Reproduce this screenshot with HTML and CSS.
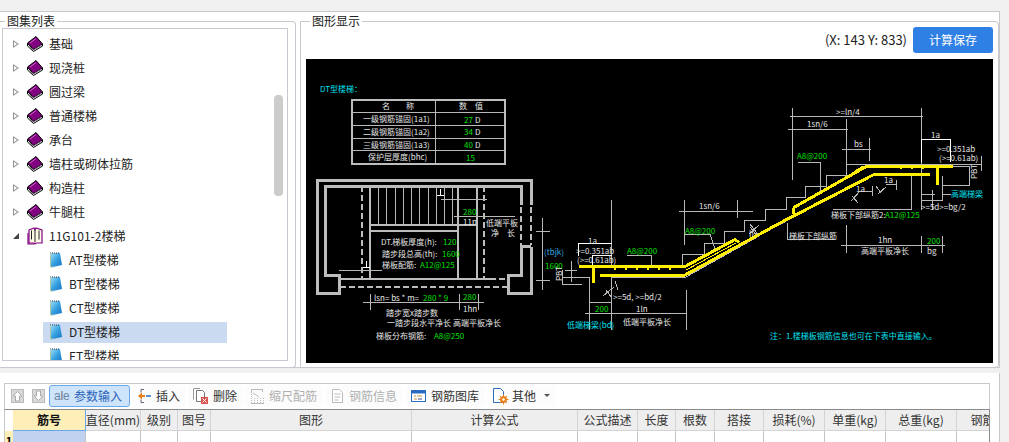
FILE: index.html
```html
<!DOCTYPE html>
<html lang="zh">
<head>
<meta charset="utf-8">
<title>图集</title>
<link rel="stylesheet" href="styles.css">
</head>
<body>
<svg class="defs" width="0" height="0">
  <defs>
    <symbol id="book" viewBox="0 0 16 16">
      <path d="M.5 7.500v2.500l6 5.500 9-5.500V8L6.500 13.500z" fill="#fff" stroke="#000"/>
      <path d="M.5 7 9 .5l6.500 7.500-9 5.500z" fill="#800080" stroke="#000"/>
      <path d="M3 7 9 2.500" stroke="#c86ac8" fill="none"/>
      <path d="M2 10.500l4.500 3.500 7.500-4.500" stroke="#888" fill="none"/>
    </symbol>
    <symbol id="openbook" viewBox="0 0 16 18">
      <path d="M2 3 7 1l1 2 1-2 6 2v13H9l-1 1-1-1H2z" fill="#fffbe6" stroke="#800080" stroke-width="1.200"/>
      <path d="M8 3v12M4.500 3.500v9M12 3.500v9" stroke="#222" fill="none"/>
      <path d="M1 6v11h6" stroke="#800080" fill="none" stroke-width="1.200"/>
    </symbol>
    <linearGradient id="noteFill" x1="0" y1="0" x2="1" y2="1">
      <stop offset="0" stop-color="#a8e2f4"/>
      <stop offset=".5" stop-color="#3aa3e2"/>
      <stop offset="1" stop-color="#1371c4"/>
    </linearGradient>
    <symbol id="note" viewBox="0 0 14 16">
      <path d="M1 1h10l2 12-9 2H1z" fill="url(#noteFill)"/>
      <path d="M1 1h10" stroke="#335" stroke-dasharray="1 1" fill="none"/>
      <path d="M1.500 1v14h3" stroke="#a8c8a8" fill="none"/>
    </symbol>
  </defs>
</svg>

<div class="topstrip"></div>

<main class="main">
  <fieldset class="group group-list">
    <legend>图集列表</legend>
    <div class="tree">
      <div class="row"><i class="tri"></i><svg class="ic-book"><use href="#book"/></svg>基础</div>
      <div class="row"><i class="tri"></i><svg class="ic-book"><use href="#book"/></svg>现浇桩</div>
      <div class="row"><i class="tri"></i><svg class="ic-book"><use href="#book"/></svg>圆过梁</div>
      <div class="row"><i class="tri"></i><svg class="ic-book"><use href="#book"/></svg>普通楼梯</div>
      <div class="row"><i class="tri"></i><svg class="ic-book"><use href="#book"/></svg>承台</div>
      <div class="row"><i class="tri"></i><svg class="ic-book"><use href="#book"/></svg>墙柱或砌体拉筋</div>
      <div class="row"><i class="tri"></i><svg class="ic-book"><use href="#book"/></svg>构造柱</div>
      <div class="row"><i class="tri"></i><svg class="ic-book"><use href="#book"/></svg>牛腿柱</div>
      <div class="row"><i class="tri-open"></i><svg class="ic-book tall"><use href="#openbook"/></svg>11G101-2楼梯</div>
      <div class="row child"><svg class="ic-note"><use href="#note"/></svg>AT型楼梯</div>
      <div class="row child"><svg class="ic-note"><use href="#note"/></svg>BT型楼梯</div>
      <div class="row child"><svg class="ic-note"><use href="#note"/></svg>CT型楼梯</div>
      <div class="row child selected"><svg class="ic-note"><use href="#note"/></svg>DT型楼梯</div>
      <div class="row child"><svg class="ic-note"><use href="#note"/></svg>ET型楼梯</div>
      <div class="thumb"></div>
    </div>
  </fieldset>

  <fieldset class="group group-view">
    <legend>图形显示</legend>
    <div class="viewbar">
      <span class="coords">(X: 143 Y: 833)</span>
      <button class="save">计算保存</button>
    </div>
    <svg class="cad" width="687" height="304" viewBox="306 59 687 304">
      <!-- table -->
      <rect class="w2" x="351.5" y="99.5" width="153" height="64"/>
      <path class="w1" d="M435.500 99v64M352 112.500h152M352 125.500h152M352 138.500h152M352 150.500h152"/>
      <text class="t cy" x="320" y="92">DT型楼梯：</text>
      <text class="t" x="382" y="109">名　　称</text>
      <text class="t" x="459" y="109">数　值</text>
      <text class="t" x="363" y="122">一级钢筋锚固(1a1)</text>
      <text class="t" x="363" y="135">二级钢筋锚固(1a2)</text>
      <text class="t" x="363" y="148">三级钢筋锚固(1a3)</text>
      <text class="t" x="368" y="160">保护层厚度(bhc)</text>
      <text class="t gr" x="464" y="123">27</text><text class="t" x="475" y="123">D</text>
      <text class="t gr" x="464" y="135">34</text><text class="t" x="475" y="135">D</text>
      <text class="t gr" x="464" y="148">40</text><text class="t" x="475" y="148">D</text>
      <text class="t gr" x="466" y="161">15</text>

      <!-- plan -->
      <path class="w3" d="M531 205V180H317v113h22v-18h-14V186h196v19M531 247v46h-23v-18h13v-29h10"/>
      <path class="w3d" d="M521 207v38M531 207v38"/>
      <path class="w2" d="M339 279h151M370 186v93M458 186v93M477 186v93M370 225h107M370 231h88"/>
      <path class="w2d" d="M490 279h18M340 287h167M362 186v92M484 186v93"/>
      <path class="w1" d="M378.500 186v39M386.500 186v39M395.500 186v39M403.500 186v39M411.500 186v39M419.500 186v39M428.500 186v39M436.500 186v39M444.500 186v39M452.500 186v39"/>
      <path class="w1w" d="M440.500 189v6M437 195.500h7M366.500 261v6M363 267.500h7"/>
      <path class="w1" d="M441 199.500h46M339 270.500h43M454 216.500h61M542.500 218v72M536 231.500h14M536 280.500h14M363 302.500h121M370.500 294v16M459.500 294v16M478.500 294v16"/>
      <text class="t gr" x="463" y="215">280</text>
      <text class="t" x="463" y="225">11n</text>
      <text class="t" x="486" y="226">低端平板</text>
      <text class="t" x="491" y="236">净　长</text>
      <text class="t" x="381" y="245">DT.梯板厚度(h):</text><text class="t gr" x="443" y="245">120</text>
      <text class="t" x="382" y="257">踏步段总高(th):</text><text class="t gr" x="442" y="257">1600</text>
      <text class="t" x="382" y="268">梯板配筋:</text><text class="t gr" x="420" y="268">A12@125</text>
      <text class="t" x="374" y="301">lsn= bs * m=</text><text class="t gr" x="423" y="301">280 * 9</text>
      <text class="t gr" x="463" y="300">280</text>
      <text class="t" x="463" y="312">1hn</text>
      <text class="t" x="386" y="316">踏步宽x踏步数</text>
      <text class="t" x="387" y="326">一踏步段水平净长</text>
      <text class="t" x="453" y="326">高端平板净长</text>
      <text class="t" x="376" y="339">梯板分布钢筋:</text>
      <text class="t gr" x="434" y="339">A8@250</text>

      <!-- section: concrete outline -->
      <path class="w1" d="M580 266.500h102v-12h22v-11h20v-12h20v-11h21v-11h21v-12h19v-11h21v-11h20v-11h135"/>
      <path class="w1" d="M562 277.500h27v25h22v-25h74l75-42M760 235l113-60M953 166.500h16v19h-27v15h-21v-25M873 174.500h57"/>
      <path class="w1" d="M562 270v14.500h20M571.500 261v21M565 270.500h12M981.500 156v15M942.500 176v24"/>
      <path class="w1" d="M611.500 200v66M684.500 200v45M737.500 200v18M679 211.500h74M585 313.500h101M589.500 290v40M611.500 290v40M686.500 290v40"/>
      <path class="w1" d="M627 255.500h24v12M685 234.500h25l5 14M798 162.500h22v28M833 209.500h78v-36M787 223v16.500h48"/>
      <path class="w1" d="M792.500 108v72M921.500 108v67M790 116.500h133M788 129.500h60M846.500 119v46M842 149.500h29M869.500 138v23M841 245.500h104M846.500 225v28M921.500 236v17M942.500 236v17"/>
      <path class="w1" d="M921 194.500h14M942 194.500h9M932.500 190v20M921 200v10"/>
      <path class="w1" d="M603 296l11-9M606 290l6 8M615 281l3 9M750 224l9 12M749 234l10-9M757 236l-7-9M851 201l9-10M852 196l6 7M860 191h12M872 186v10M878 194l8-7M876 186l5 7M886 184h10M896 180v10"/>
      <path class="w1w" d="M578.500 256v-12.500h33M592.500 266v-10.500h19M921.500 162v-23h29v23"/>
      <path class="yl3" d="M579 266.500h106l50-27 4 3M600 275h85l95-52M780 223l93-48M793 208l74-42h86M873 174.500h57M593.500 266v17M937.500 166v19M793 208l1 6"/>
      <path class="yl1" d="M686 270l50-27M690 273l48-26M855 171l8-5"/>
      <path class="yl1d" d="M614 269h62M900 168h30"/>
      <text class="t" x="588" y="244">1a</text>
      <text class="t" x="576" y="254">&gt;=0.351ab</text>
      <text class="t" x="577" y="263">(&gt;=0.61ab)</text>
      <text class="t cy2" x="544" y="255">(tbjk)</text>
      <text class="t gr" x="545" y="269">1600</text>
      <text class="t" x="0" y="0" transform="translate(562 281) rotate(-90)">PBT</text>
      <text class="t" x="613" y="300">&gt;=5d, &gt;=bd/2</text>
      <text class="t gr" x="595" y="312">200</text>
      <text class="t" x="636" y="312">1ln</text>
      <text class="t" x="623" y="325">低端平板净长</text>
      <text class="t cy" x="567" y="328">低端梯梁(bd)</text>
      <text class="t" x="699" y="209">1sn/6</text>
      <text class="t gr" x="685" y="234">A8@200</text>
      <text class="t gr" x="627" y="254">A8@200</text>
      <text class="t" x="749" y="237">h</text>
      <text class="t" x="836" y="115">&gt;=ln/4</text>
      <text class="t" x="807" y="127">1sn/6</text>
      <text class="t" x="854" y="147">bs</text>
      <text class="t gr" x="797" y="159">A8@200</text>
      <text class="t" x="884" y="183">1a</text>
      <text class="t" x="856" y="192">1a</text>
      <text class="t" x="831" y="218">梯板下部纵筋2:</text>
      <text class="t gr" x="885" y="218">A12@125</text>
      <text class="t" x="789" y="239">梯板下部纵筋</text>
      <text class="t" x="878" y="243">1hn</text>
      <text class="t gr" x="927" y="244">200</text>
      <text class="t" x="927" y="254">bg</text>
      <text class="t" x="861" y="254">高端平板净长</text>
      <text class="t cy" x="951" y="197">高端梯梁</text>
      <text class="t" x="921" y="210">&gt;=5d&gt;=bg/2</text>
      <text class="t" x="931" y="138">1a</text>
      <text class="t" x="937" y="152">&gt;=0.351ab</text>
      <text class="t" x="939" y="161">(&gt;=0.61ab)</text>
      <text class="t" x="0" y="0" transform="translate(977 179) rotate(-90)">PBT</text>
      <text class="t cy" x="770" y="339">注：1.楼梯板钢筋信息也可在下表中直接输入。</text>
    </svg>
  </fieldset>
</main>

<section class="bottom">
  <div class="frame">
    <div class="toolbar">
      <svg class="ic-arrow" width="13" height="14" viewBox="0 0 13 14"><rect x=".5" y=".5" width="12" height="13" fill="#d8d8d8" stroke="#bbb"/><path d="M6.500 2.500 11 7H8.500v5h-4V7H2z" fill="#fff" stroke="#aaa"/></svg>
      <svg class="ic-arrow second" width="13" height="14" viewBox="0 0 13 14"><rect x=".5" y=".5" width="12" height="13" fill="#d8d8d8" stroke="#bbb"/><path d="M6.500 11.500 11 7H8.500V2h-4v5H2z" fill="#fff" stroke="#aaa"/></svg>
      <button class="tool active"><span class="aje">a<span class="caret">I</span>e</span>参数输入</button>
      <button class="tool"><svg width="13" height="16" viewBox="0 0 13 16"><path d="M3 1.500h3M3 14.500h3M3 1.500v3M3 11.500v3" stroke="#667" fill="none"/><path d="M0 8l4-3.500V7h3v2H4v2.500z" fill="#e8801a"/><path d="M8 7h5v2H8z" fill="#5a8fd0"/></svg>插入</button>
      <button class="tool"><svg width="15" height="17" viewBox="0 0 15 17"><path d="M3.500 3.500h6l2 2v6M3.500 3.500v11h5" fill="#fff" stroke="#777"/><path d="M1 1.500h6M.5 1.500v11" stroke="#999" fill="none"/><rect x="8" y="10" width="7" height="7" fill="#d9534f"/><path d="M9.500 11.500l4 4M13.500 11.500l-4 4" stroke="#fff"/></svg>删除</button>
      <button class="tool off"><svg width="14" height="16" viewBox="0 0 14 16"><path d="M1.500 4v11M4.500 10v5M7.500 10v5M10.500 10v5M13.500 10v5" stroke="#bbb" stroke-dasharray="1 1" fill="none"/><path d="M1 1.500h12M1.500 1v3M12.500 1v3M1 15.500h13M3 5l6 4" stroke="#bbb" fill="none"/></svg>缩尺配筋</button>
      <button class="tool off"><svg width="13" height="16" viewBox="0 0 13 16"><path d="M1.500 1.500h7l3 3v10h-10z" fill="#fff" stroke="#bbb"/><path d="M3.500 6h6M3.500 9h6M3.500 12h4" stroke="#bbb"/></svg>钢筋信息</button>
      <button class="tool"><svg width="15" height="14" viewBox="0 0 15 14"><rect x=".5" y="1.500" width="14" height="11" fill="#fff" stroke="#2b6cc0"/><path d="M1 2h13v2.500H1z" fill="#2b6cc0"/><path d="M3 7h2M6 7h5M3 10h3" stroke="#c09030"/><path d="M7 10h4" stroke="#448"/></svg>钢筋图库</button>
      <button class="tool tool-other"><svg width="17" height="18" viewBox="0 0 17 18"><path d="M1.500 1.500h7l3 3v11h-10z" fill="#fff" stroke="#2b6cc0"/><circle cx="11.500" cy="12.500" r="3.500" fill="#e8801a"/><path d="M11.500 7.500v10M6.500 12.500h10M8 9l7 7M15 9l-7 7" stroke="#e8801a"/><circle cx="11.500" cy="12.500" r="1.300" fill="#fff"/></svg>其他<i class="drop"></i></button>
    </div>
    <div class="grid">
      <div class="h corner"></div>
      <div class="h key">筋号</div>
      <div class="h">直径(mm)</div>
      <div class="h">级别</div>
      <div class="h">图号</div>
      <div class="h">图形</div>
      <div class="h">计算公式</div>
      <div class="h">公式描述</div>
      <div class="h">长度</div>
      <div class="h">根数</div>
      <div class="h">搭接</div>
      <div class="h">损耗(%)</div>
      <div class="h">单重(kg)</div>
      <div class="h">总重(kg)</div>
      <div class="h">钢筋归类</div>

      <div class="c rowhead">1</div>
      <div class="c picked"></div>
      <div class="c"></div><div class="c"></div><div class="c"></div><div class="c"></div><div class="c"></div>
      <div class="c"></div><div class="c"></div><div class="c"></div><div class="c"></div><div class="c"></div>
      <div class="c"></div><div class="c"></div><div class="c"></div>
    </div>
  </div>
</section>
</body>
</html>
```

FILE: styles.css
```css
* { box-sizing: border-box; }
html, body { margin: 0; padding: 0; }
body {
  width: 1009px;
  height: 442px;
  overflow: hidden;
  background: #f0f0f0;
  color: #222;
  font: 12px/16px "Noto Sans CJK SC", "Noto Sans", sans-serif;
}
.defs { position: absolute; }

.topstrip { height: 12px; width: 1000px; border-bottom: 1px solid #c8c8c8; }

.main {
  display: flex;
  gap: 4px;
  width: 1000px;
  height: 356px;
  padding-top: 2px;
  background: #fff;
  border-right: 1px solid #c8c8c8;
  border-bottom: 1px solid #c8c8d0;
}

.group {
  margin: 0;
  min-width: 0;
  height: 354px;
  border: 1px solid #c8c8d0;
  border-radius: 0 4px 4px 0;
}
.group legend { padding: 0 2px; line-height: 14px; font-size: 12px; color: #222; }
.group-list { width: 296px; border-left: 0; padding: 0 7px 6px 2px; }
.group-list legend { margin-left: 3px; }
.group-view { width: 699px; padding: 0 5px 4px 5px; }
.group-view legend { margin-left: 4px; }

.tree {
  position: relative;
  height: 333px;
  padding-top: 3px;
  border: 1px solid #c8c8d0;
  overflow: hidden;
}
.row { display: flex; align-items: center; height: 24px; padding-left: 10px; white-space: nowrap; }
.tri {
  width: 6px; height: 8px; margin-right: 8px;
  background: #999;
  clip-path: polygon(0 0, 100% 50%, 0 100%, 0 0, 1px 2px, 1px 6px, 4px 4px, 1px 2px);
}
.tri-open {
  width: 6px; height: 6px; margin-right: 8px;
  background: #444;
  clip-path: polygon(100% 0, 100% 100%, 0 100%);
}
.ic-book { width: 16px; height: 16px; margin-right: 6px; flex: none; }
.ic-book.tall { height: 18px; }
.row.child { padding-left: 46px; width: 225px; }
.ic-note { width: 14px; height: 16px; margin-right: 6px; flex: none; }
.row.selected {
  background: linear-gradient(#c9daf1, #c9daf1) no-repeat 40px 1.5px / 184px 21px;
}
.thumb {
  position: absolute;
  left: 271px; top: 66px;
  width: 9px; height: 101px;
  background: #ccc;
  border-radius: 4px;
}

.viewbar {
  display: flex;
  justify-content: flex-end;
  align-items: center;
  gap: 6px;
  height: 26px;
  margin-top: -1px;
  margin-bottom: 6px;
}
.coords { font-size: 13px; color: #222; }
.save {
  width: 80px; height: 26px;
  border: 0; border-radius: 3px;
  background: #2f80e4;
  color: #fff;
  font: inherit;
  padding: 0;
}
.cad { display: block; background: #000; }
.cad path, .cad rect { fill: none; shape-rendering: crispEdges; }
.w1 { stroke: #b8b8b8; stroke-width: 1; }
.w1w { stroke: #fff; stroke-width: 1; }
.w2 { stroke: #bdbdbd; stroke-width: 2; }
.w3 { stroke: #bdbdbd; stroke-width: 3; }
.w2d { stroke: #bdbdbd; stroke-width: 2; stroke-dasharray: 6 3; }
.w3d { stroke: #bdbdbd; stroke-width: 2; stroke-dasharray: 6 3; }
.yl3 { stroke: #ffee00; stroke-width: 3; }
.yl1 { stroke: #ffee00; stroke-width: 1; }
.yl1d { stroke: #ffee00; stroke-width: 2; stroke-dasharray: 2 9; }
.t { font: 8px "Noto Sans CJK SC", "Liberation Sans", sans-serif; fill: #e4e4e4; }
.gr { fill: #00e000; }
.cy { fill: #00e0f0; }
.cy2 { fill: #30a8e0; }

.bottom {
  width: 1000px;
  height: 69px;
  margin-top: 5px;
  padding: 10px 9px 0 4px;
  background: #fff;
  border-right: 1px solid #c8c8c8;
}
.frame { height: 60px; border-top: 1px solid #c8c8c8; overflow: hidden; }
.toolbar {
  display: flex;
  align-items: center;
  height: 25px;
  padding: 0 0 2px 6px;
  border-left: 1px solid #c8c8c8;
  border-right: 1px solid #c8c8c8;
}
.ic-arrow { flex: none; margin-right: 8px; }
.ic-arrow.second { margin-right: 4px; }
.tool {
  display: flex;
  align-items: center;
  gap: 5px;
  height: 22px;
  padding: 0 5px 0 4px;
  margin-right: 2px;
  border: 1px solid transparent;
  border-radius: 3px;
  background: #fcfcfc;
  color: #333;
  font: inherit;
  white-space: nowrap;
}
.tool.active {
  width: 81px;
  padding: 0 0 0 4px;
  margin-right: 3px;
  gap: 5px;
  background: #cde4fb;
  border-color: #6aa8ea;
  color: #2a62b8;
}
.tool.off { color: #b0b0b0; margin-right: 3px; }
.tool-other svg { margin-right: -2px; }
.aje { font-family: "Liberation Sans", sans-serif; color: #6a88a8; font-size: 12px; width: 15px; letter-spacing: -.5px; }
.caret { color: #777; }
.drop {
  width: 0; height: 0; margin-left: 3px;
  border-left: 3px solid transparent;
  border-right: 3px solid transparent;
  border-top: 3px solid #555;
}

.grid {
  display: grid;
  grid-template-columns: 8px 73px 55px 37px 33px 201px 166px 60px 38px 39px 49px 61px 61px 71px 76px;
  grid-template-rows: 21px 21px;
  width: 986px;
  border-top: 1px solid #8a8a8a;
  border-left: 1px solid #c8c8c8;
  border-right: 1px solid #8a8a8a;
  overflow: hidden;
}
.h {
  display: flex;
  align-items: center;
  justify-content: center;
  background: #eeeeee;
  border-right: 1px solid #d4d4d4;
  border-bottom: 1px solid #d4d4d4;
  color: #333;
  white-space: nowrap;
}
.h.corner { background: #fff; border: 0; }
.h.key { background: #feeeb8; font-weight: 700; color: #111; border-right: 1px solid #6aa8ea; border-bottom: 1px solid #6aa8ea; }
.c { background: #fff; border-right: 1px solid #c4c4c4; }
.c.picked { background: #c0d2ef; }
.c.rowhead { background: #feeeb8; font-weight: 700; color: #000; border: 0; padding-top: 3px; font-size: 11px; line-height: 14px; text-align: center; }
```
